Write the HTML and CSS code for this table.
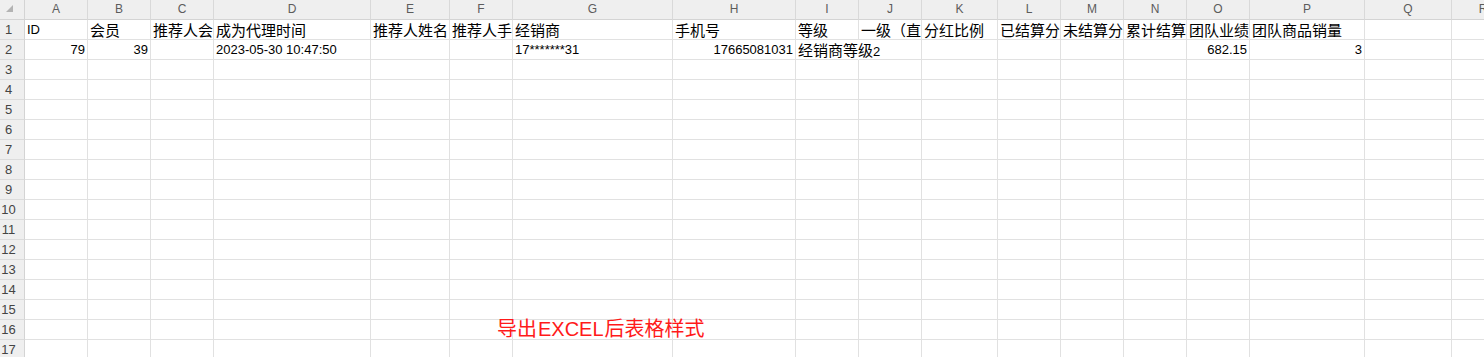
FILE: index.html
```html
<!DOCTYPE html>
<html lang="zh-CN">
<head>
<meta charset="utf-8">
<title>导出EXCEL后表格样式</title>
<link rel="stylesheet" href="styles.css">
</head>
<body>
<div class="sheet">
  <div class="row hdr">
    <div class="corner"><svg width="24" height="19" viewBox="0 0 24 19"><polygon points="13,5 13,12 6,12" fill="#b3b3b3"/></svg></div>
    <div>A</div><div>B</div><div>C</div><div>D</div><div>E</div><div>F</div><div>G</div><div>H</div><div>I</div><div>J</div><div>K</div><div>L</div><div>M</div><div>N</div><div>O</div><div>P</div><div>Q</div><div>R</div>
  </div>
  <div class="row">
    <div class="rh">1</div>
    <div class="lat">ID</div><div>会员</div><div>推荐人会</div><div>成为代理时间</div><div>推荐人姓名</div><div>推荐人手</div><div>经销商</div><div>手机号</div><div>等级</div><div>一级（直</div><div>分红比例</div><div>已结算分</div><div>未结算分</div><div>累计结算</div><div>团队业绩</div><div>团队商品销量</div><div></div><div></div>
  </div>
  <div class="row">
    <div class="rh">2</div>
    <div class="num">79</div><div class="num">39</div><div></div><div class="lat">2023-05-30 10:47:50</div><div></div><div></div><div class="lat">17*******31</div><div class="num">17665081031</div><div class="ov">经销商等级<span class="lat">2</span></div><div></div><div></div><div></div><div></div><div></div><div class="num">682.15</div><div class="num">3</div><div></div><div></div>
  </div>
  <div class="row"><div class="rh">3</div><i></i><i></i><i></i><i></i><i></i><i></i><i></i><i></i><i></i><i></i><i></i><i></i><i></i><i></i><i></i><i></i><i></i><i></i></div>
  <div class="row"><div class="rh">4</div><i></i><i></i><i></i><i></i><i></i><i></i><i></i><i></i><i></i><i></i><i></i><i></i><i></i><i></i><i></i><i></i><i></i><i></i></div>
  <div class="row"><div class="rh">5</div><i></i><i></i><i></i><i></i><i></i><i></i><i></i><i></i><i></i><i></i><i></i><i></i><i></i><i></i><i></i><i></i><i></i><i></i></div>
  <div class="row"><div class="rh">6</div><i></i><i></i><i></i><i></i><i></i><i></i><i></i><i></i><i></i><i></i><i></i><i></i><i></i><i></i><i></i><i></i><i></i><i></i></div>
  <div class="row"><div class="rh">7</div><i></i><i></i><i></i><i></i><i></i><i></i><i></i><i></i><i></i><i></i><i></i><i></i><i></i><i></i><i></i><i></i><i></i><i></i></div>
  <div class="row"><div class="rh">8</div><i></i><i></i><i></i><i></i><i></i><i></i><i></i><i></i><i></i><i></i><i></i><i></i><i></i><i></i><i></i><i></i><i></i><i></i></div>
  <div class="row"><div class="rh">9</div><i></i><i></i><i></i><i></i><i></i><i></i><i></i><i></i><i></i><i></i><i></i><i></i><i></i><i></i><i></i><i></i><i></i><i></i></div>
  <div class="row"><div class="rh">10</div><i></i><i></i><i></i><i></i><i></i><i></i><i></i><i></i><i></i><i></i><i></i><i></i><i></i><i></i><i></i><i></i><i></i><i></i></div>
  <div class="row"><div class="rh">11</div><i></i><i></i><i></i><i></i><i></i><i></i><i></i><i></i><i></i><i></i><i></i><i></i><i></i><i></i><i></i><i></i><i></i><i></i></div>
  <div class="row"><div class="rh">12</div><i></i><i></i><i></i><i></i><i></i><i></i><i></i><i></i><i></i><i></i><i></i><i></i><i></i><i></i><i></i><i></i><i></i><i></i></div>
  <div class="row"><div class="rh">13</div><i></i><i></i><i></i><i></i><i></i><i></i><i></i><i></i><i></i><i></i><i></i><i></i><i></i><i></i><i></i><i></i><i></i><i></i></div>
  <div class="row"><div class="rh">14</div><i></i><i></i><i></i><i></i><i></i><i></i><i></i><i></i><i></i><i></i><i></i><i></i><i></i><i></i><i></i><i></i><i></i><i></i></div>
  <div class="row"><div class="rh">15</div><i></i><i></i><i></i><i></i><i></i><i></i><i></i><i></i><i></i><i></i><i></i><i></i><i></i><i></i><i></i><i></i><i></i><i></i></div>
  <div class="row"><div class="rh">16</div><i></i><i></i><i></i><i></i><i></i><i></i><i></i><i></i><i></i><i></i><i></i><i></i><i></i><i></i><i></i><i></i><i></i><i></i></div>
  <div class="row"><div class="rh">17</div><i></i><i></i><i></i><i></i><i></i><i></i><i></i><i></i><i></i><i></i><i></i><i></i><i></i><i></i><i></i><i></i><i></i><i></i></div>
  <div class="note">导出<span class="note-lat">EXCEL</span>后表格样式</div>
</div>
</body>
</html>
```
FILE: styles.css
```css
html, body {
  margin: 0;
  padding: 0;
  background: #ffffff;
  overflow: hidden;
}

.sheet {
  position: relative;
  width: 1515px;
  font-family: "Noto Sans CJK SC", "Noto Sans", sans-serif;
  color: #000;
}

.row {
  display: grid;
  grid-template-columns: 25px 63px 63px 63px 157px 79px 63px 160px 123px 63px 63px 76px 63px 63px 63px 63px 115px 87px 63px;
  height: 20px;
}

.row > * {
  box-sizing: border-box;
  height: 20px;
  border-right: 1px solid #e1e1e1;
  border-bottom: 1px solid #e1e1e1;
  overflow: hidden;
  white-space: nowrap;
  font-size: 15px;
  line-height: 19px;
  padding: 0 2px;
  font-style: normal;
}

.hdr > * {
  background: #efefef;
  border-right-color: #d9d9d9;
  border-bottom-color: #d4d4d4;
  text-align: center;
  font-family: "Liberation Sans", sans-serif;
  font-size: 12px;
  color: #5c5c5c;
}

.hdr > .corner {
  padding: 0;
  display: flex;
  border-right-color: #d4d4d4;
}

.row > .rh {
  background: #efefef;
  border-right-color: #d4d4d4;
  border-bottom-color: #dcdcdc;
  font-family: "Liberation Sans", sans-serif;
  font-size: 13px;
  color: #444;
  text-align: center;
  padding: 0 7px 0 0;
}

.row > .lat,
.row .lat {
  font-family: "Liberation Sans", sans-serif;
  font-size: 13px;
}

.row > .num {
  font-family: "Liberation Sans", sans-serif;
  font-size: 13px;
  text-align: right;
}

.row > .ov {
  overflow: visible;
  border-right-color: transparent;
}

.note {
  position: absolute;
  left: 497px;
  top: 317px;
  font-size: 20px;
  line-height: 22px;
  color: #ff1a1a;
  white-space: nowrap;
}

.note-lat {
  font-family: "Liberation Sans", sans-serif;
  margin: 0 1px;
}
```
